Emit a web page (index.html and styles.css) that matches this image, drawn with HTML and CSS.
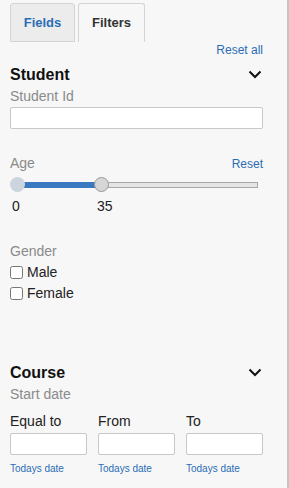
FILE: index.html
```html
<!DOCTYPE html>
<html lang="en">
<head>
  <meta charset="UTF-8" />
  <title>Filters</title>
  <link rel="stylesheet" href="styles.css">
</head>
<body>
  <div class="panel">
    <div class="tabs">
      <div class="tab">Fields</div>
      <div class="tab active">Filters</div>
    </div>

    <div class="reset-all"><a href="#">Reset all</a></div>

    <div class="group-head">
      <h3>Student</h3>
      <svg class="chevron" width="14" height="9" viewBox="0 0 14 9"><path d="M1.5 1.5 L7 7 L12.5 1.5" fill="none" stroke="#111" stroke-width="2"/></svg>
    </div>

    <label class="field-label">Student Id</label>
    <input type="text" class="text-input">

    <div class="range-head">
      <span class="field-label">Age</span>
      <a href="#" class="reset">Reset</a>
    </div>
    <div class="slider">
      <div class="track"></div>
      <div class="fill" style="width: 84px"></div>
      <div class="thumb start"></div>
      <div class="thumb end" style="left: 84px"></div>
    </div>
    <div class="range-values">
      <span class="min">0</span>
      <span class="max">35</span>
    </div>

    <div class="field-label gender">Gender</div>
    <label class="check"><input type="checkbox"> Male</label>
    <label class="check"><input type="checkbox"> Female</label>

    <div class="group-head course">
      <h3>Course</h3>
      <svg class="chevron" width="14" height="9" viewBox="0 0 14 9"><path d="M1.5 1.5 L7 7 L12.5 1.5" fill="none" stroke="#111" stroke-width="2"/></svg>
    </div>
    <div class="field-label">Start date</div>

    <div class="dates">
      <div class="date-col">
        <label>Equal to</label>
        <input type="text">
        <a href="#">Todays date</a>
      </div>
      <div class="date-col">
        <label>From</label>
        <input type="text">
        <a href="#">Todays date</a>
      </div>
      <div class="date-col">
        <label>To</label>
        <input type="text">
        <a href="#">Todays date</a>
      </div>
    </div>
  </div>
</body>
</html>
```

FILE: styles.css
```css
body {
  margin: 0;
  font-family: "Liberation Sans", Arial, sans-serif;
  background: #f7f7f7;
  color: #222;
}
.panel {
  width: 289px;
  height: 488px;
  box-sizing: border-box;
  padding: 3px 24px 0 10px;
  border-right: 2px solid #c4c4c4;
}
a {
  color: #2a6db5;
  text-decoration: none;
}
.tabs {
  display: flex;
  gap: 3px;
}
.tab {
  width: 65px;
  height: 39px;
  box-sizing: border-box;
  border: 1px solid #d4d4d4;
  border-radius: 3px 3px 0 0;
  background: #ececec;
  color: #2a6db5;
  font-weight: bold;
  font-size: 13px;
  text-align: center;
  line-height: 37px;
}
.tab.active {
  width: 67px;
  background: #f7f7f7;
  color: #333;
  border-bottom: none;
}
.reset-all {
  text-align: right;
  font-size: 12px;
  margin-top: 1px;
  line-height: 14px;
}
.group-head {
  display: flex;
  justify-content: space-between;
  align-items: center;
  margin-top: 9px;
}
.group-head h3 {
  margin: 0;
  font-size: 16px;
  line-height: 18px;
  color: #111;
}
.chevron {
  margin-right: 1px;
  margin-top: -2px;
}
.field-label {
  display: block;
  color: #8a8a8a;
  font-size: 14px;
  line-height: 18px;
  margin-top: 3px;
}
.text-input {
  display: block;
  width: 253px;
  height: 22px;
  box-sizing: border-box;
  margin: 2px 0 0;
  border: 1px solid #c8c8c8;
  border-radius: 2px;
  background: #fff;
}
.range-head {
  display: flex;
  justify-content: space-between;
  align-items: baseline;
  margin-top: 25px;
}
.range-head .field-label {
  margin-top: 0;
}
.reset {
  font-size: 12px;
}
.slider {
  position: relative;
  height: 18px;
  margin-top: 4px;
  width: 248px;
}
.track {
  position: absolute;
  left: 7px;
  right: 0;
  top: 6px;
  height: 6px;
  box-sizing: border-box;
  background: #e4e4e4;
  border: 1px solid #a8a8a8;
}
.fill {
  position: absolute;
  left: 7px;
  top: 6px;
  height: 6px;
  background: #3a78c0;
}
.thumb {
  position: absolute;
  top: 1px;
  width: 15px;
  height: 15px;
  box-sizing: border-box;
  border-radius: 50%;
}
.thumb.start {
  left: 0;
  background: #ccd4dd;
}
.thumb.end {
  background: #d6d6d6;
  border: 1px solid #9a9a9a;
}
.range-values {
  display: flex;
  font-size: 14px;
  color: #222;
  margin-top: 4px;
  line-height: 16px;
}
.range-values .min {
  width: 85px;
  padding-left: 2px;
}
.field-label.gender {
  margin-top: 28px;
}
.check {
  display: flex;
  align-items: center;
  font-size: 14px;
  line-height: 18px;
  margin-top: 3px;
  color: #222;
}
.check input {
  margin: 0 4px 0 0;
  width: 13px;
  height: 13px;
}
.group-head.course {
  margin-top: 62px;
}
.dates {
  display: flex;
  gap: 11px;
  margin-top: 10px;
}
.date-col {
  width: 77px;
}
.date-col label {
  display: block;
  font-size: 14px;
  line-height: 16px;
  color: #222;
}
.date-col input {
  display: block;
  width: 77px;
  height: 22px;
  box-sizing: border-box;
  margin-top: 4px;
  border: 1px solid #c8c8c8;
  border-radius: 2px;
  background: #fff;
}
.date-col a {
  display: block;
  font-size: 10px;
  margin-top: 8px;
}
```
